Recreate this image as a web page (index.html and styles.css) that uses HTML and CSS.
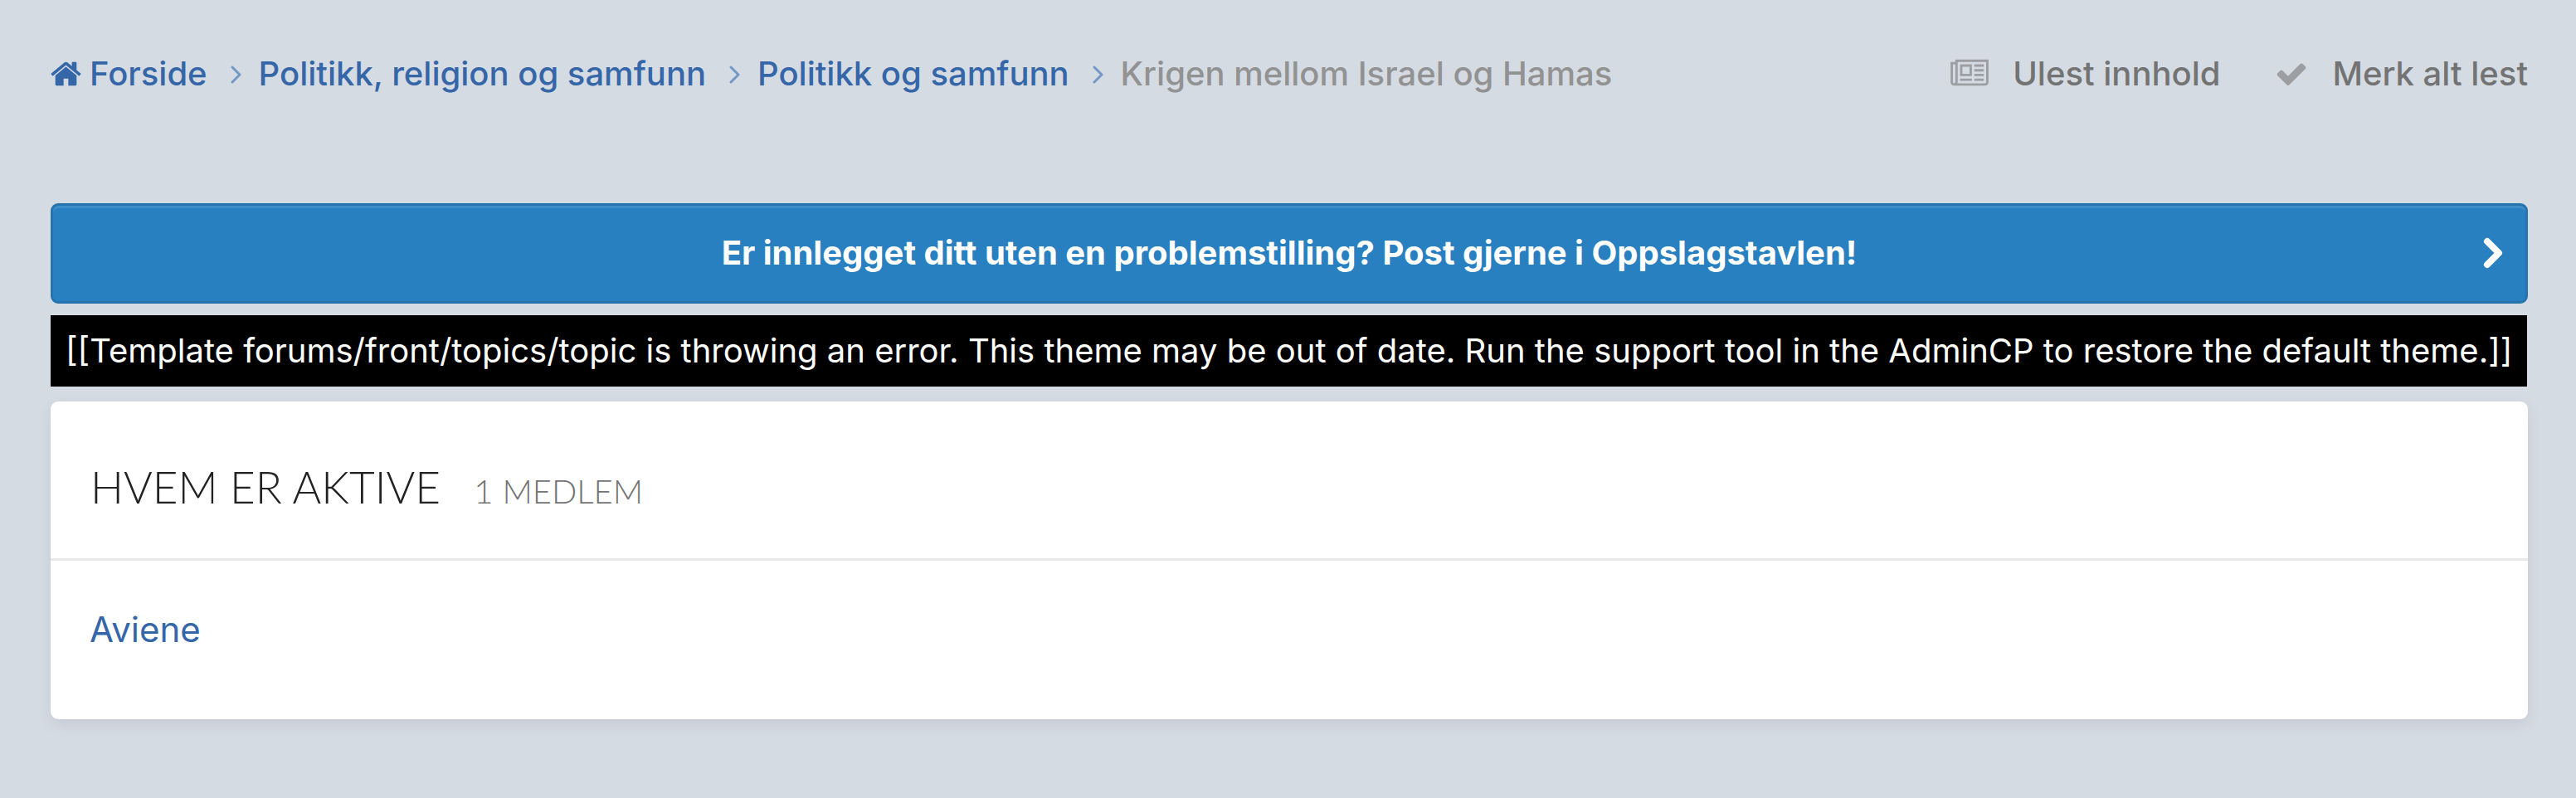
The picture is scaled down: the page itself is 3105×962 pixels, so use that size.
FILE: index.html
```
<!DOCTYPE html>
<html lang="nb">
<head>
	<meta charset="UTF-8">
	<title>Krigen mellom Israel og Hamas</title>
	<link rel="stylesheet" href="styles.css">
</head>
<body>
	<div id="container">
		<nav class="breadcrumb">
			<ul class="trail">
				<li>
					<a href="#"><svg class="home" viewBox="0 0 1664 1792"><path d="M1408 992v480q0 26-19 45t-45 19h-384v-384h-256v384h-384q-26 0-45-19t-19-45v-480q0-1 .5-3t.5-3l575-474 575 474q1 2 1 6zm223-69l-62 74q-8 9-21 11h-3q-13 0-21-7l-692-577-692 577q-12 8-24 7-13-2-21-11l-62-74q-8-10-7-23.5t11-21.5l719-599q32-26 76-26t76 26l244 204v-195q0-14 9-23t23-9h192q14 0 23 9t9 23v408l219 182q10 8 11 21.5t-7 23.5z"/></svg>Forside</a>
					<svg class="angle" viewBox="0 0 14 22"><path d="M2 2l9 9-9 9"/></svg>
				</li>
				<li>
					<a href="#">Politikk, religion og samfunn</a>
					<svg class="angle" viewBox="0 0 14 22"><path d="M2 2l9 9-9 9"/></svg>
				</li>
				<li>
					<a href="#">Politikk og samfunn</a>
					<svg class="angle" viewBox="0 0 14 22"><path d="M2 2l9 9-9 9"/></svg>
				</li>
				<li class="current">Krigen mellom Israel og Hamas</li>
			</ul>
			<ul class="tools">
				<li>
					<a href="#"><svg class="news" viewBox="0 0 2048 1792"><path d="M1024 512h-384v384h384v-384zm128 640v128h-640v-128h640zm0-768v640h-640v-640h640zm640 768v128h-512v-128h512zm0-256v128h-512v-128h512zm0-256v128h-512v-128h512zm0-256v128h-512v-128h512zm-1536 960v-960h-128v960q0 26 19 45t45 19 45-19 19-45zm1664 0v-1088h-1536v1088q0 33-11 64h1483q26 0 45-19t19-45zm128-1216v1216q0 80-56 136t-136 56h-1664q-80 0-136-56t-56-136v-1088h256v-128h1792z"/></svg>Ulest innhold</a>
				</li>
				<li>
					<a href="#"><svg class="check" viewBox="0 0 1792 1792"><path d="M1671 566q0 40-28 68l-724 724-136 136q-28 28-68 28t-68-28l-136-136-362-362q-28-28-28-68t28-68l136-136q28-28 68-28t68 28l294 295 656-657q28-28 68-28t68 28l136 136q28 28 28 68z"/></svg>Merk alt lest</a>
				</li>
			</ul>
		</nav>
		<a class="announcement" href="#">
			<span>Er innlegget ditt uten en problemstilling? Post gjerne i Oppslagstavlen!</span>
			<svg viewBox="0 0 24 38"><path d="M5 5l14 14-14 14"/></svg>
		</a>
		<p class="error">[[Template forums/front/topics/topic is throwing an error. This theme may be out of date. Run the support tool in the AdminCP to restore the default theme.]]</p>
		<section class="active-users">
			<h2>Hvem er aktive <small>1 medlem</small></h2>
			<ul>
				<li><a href="#">Aviene</a></li>
			</ul>
		</section>
	</div>
</body>
</html>
```

FILE: styles.css
```
*{
	margin: 0;
	padding: 0;
	box-sizing: border-box;
}
body{
	background: #d5dbe3;
	color: #222;
	font: 40px/60px Inter, "Liberation Sans", sans-serif;
}
ul{
	list-style: none;
}
a{
	color: #3566a8;
	text-decoration: none;
}
#container{
	padding: 59px 58px 58px 61px;
}
.breadcrumb{
	display: flex;
	justify-content: space-between;
	margin-bottom: 126px;
	font-weight: 500;
}
.breadcrumb ul,
.breadcrumb li,
.breadcrumb a{
	display: flex;
	align-items: center;
}
.breadcrumb svg{
	height: 40px;
	fill: currentColor;
}
.breadcrumb .home{
	width: 37px;
	margin-right: 10px;
}
.breadcrumb .angle{
	width: 14px;
	height: 22px;
	margin: 2px 20px 0 28px;
	fill: none;
	stroke: #7498c6;
	stroke-width: 3;
	stroke-linecap: round;
	stroke-linejoin: round;
}
.trail .current{
	color: #929292;
}
.tools{
	gap: 66px;
}
.tools a{
	color: #737373;
}
.tools svg{
	color: #9d9ea1;
}
.tools .news{
	width: 46px;
	margin-right: 29px;
}
.tools .check{
	width: 40px;
	margin-right: 29px;
}
.announcement{
	display: flex;
	align-items: center;
	padding: 27px 27px 28px;
	border: 3px solid #2574ae;
	border-radius: 9px;
	background: #2980c0;
	box-shadow: inset 0 3px 0 rgba(255,255,255,.1);
	color: #fff;
	font-weight: 700;
}
.announcement span{
	flex: 1;
	padding-left: 24px;
	text-align: center;
}
.announcement svg{
	width: 24px;
	height: 38px;
	fill: none;
	stroke: #fff;
	stroke-width: 8;
	stroke-linecap: round;
	stroke-linejoin: round;
}
.error{
	width: fit-content;
	margin: 14px 0 18px;
	padding: 13px 18px;
	background: #000;
	color: #fff;
}
.active-users{
	border-radius: 9px;
	background: #fff;
	box-shadow: 0 6px 18px rgba(0,0,50,.08);
}
.active-users h2{
	padding: 73px 48px 56px;
	border-bottom: 3px solid #e8e8e8;
	font: 300 53px/60px Lato, "Open Sans", sans-serif;
	text-transform: uppercase;
}
.active-users small{
	margin-left: 26px;
	color: #737373;
	font-size: 40px;
	line-height: 40px;
}
.active-users ul{
	padding: 53px 47px 78px;
	font-size: 42px;
}
```
